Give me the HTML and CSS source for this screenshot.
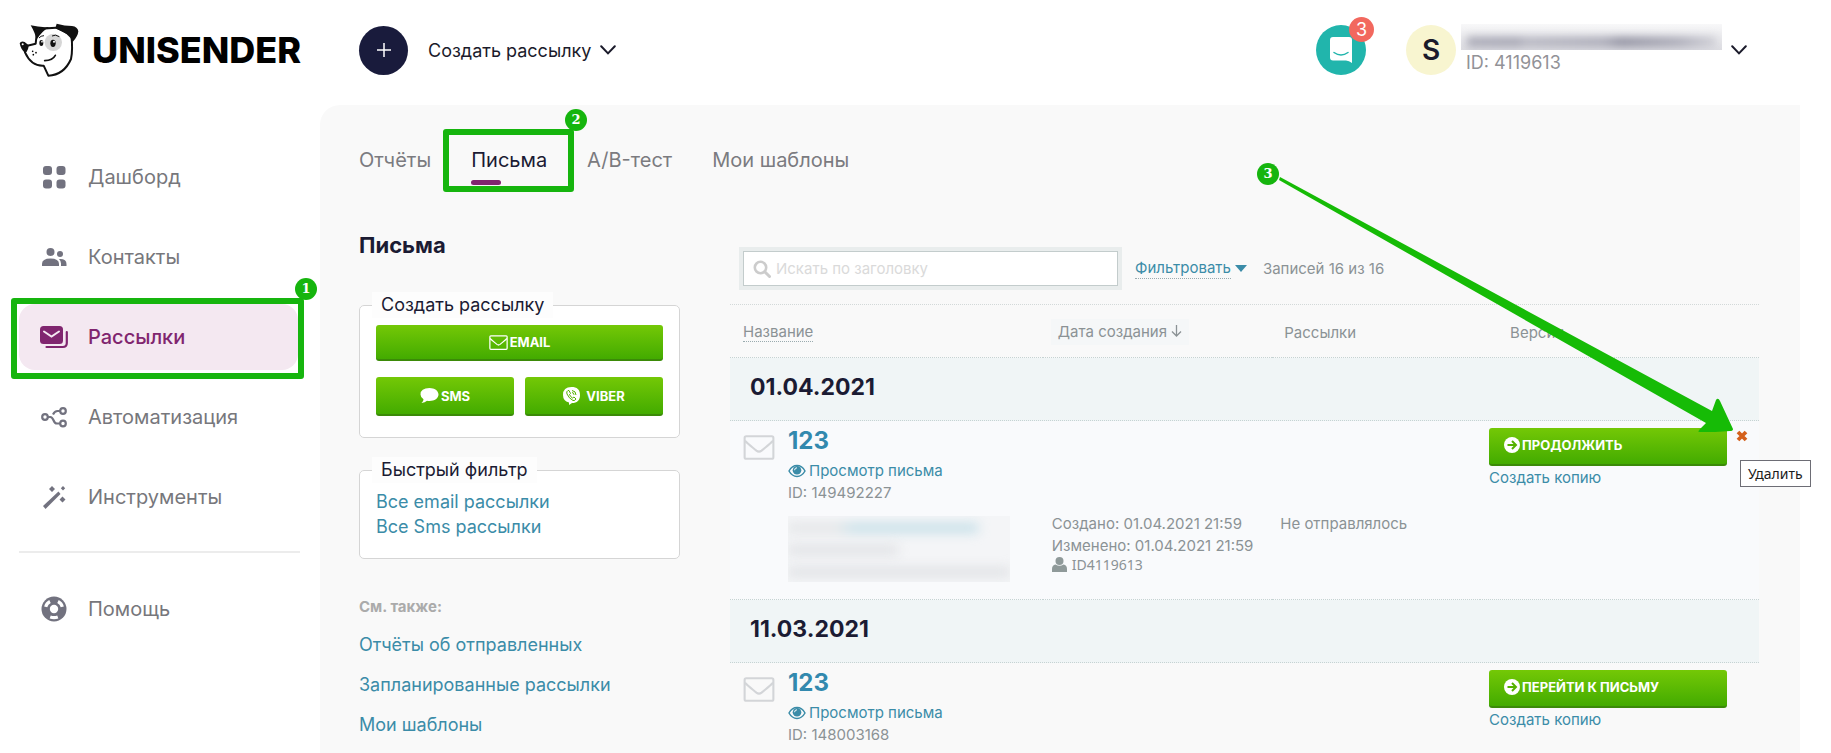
FILE: index.html
```html
<!DOCTYPE html>
<html lang="ru">
<head>
    <meta charset="UTF-8">
    <meta name="viewport" content="width=device-width, initial-scale=1.0">
    <title>Письма - Unisender</title>
    <link rel="stylesheet" href="styles.css">
</head>
<body>
    <!-- shared icons -->
    <svg class="sprite" width="0" height="0">
        <symbol id="i-envelope" viewBox="0 0 30 24">
            <rect x="1.2" y="1.2" width="27.6" height="21.6" rx="1.5" fill="none" stroke="currentColor" stroke-width="2"/>
            <path d="M1.5 5.5C5 9 9 12 12.5 15q2.5 2 5 0C21 12 25 9 28.5 5.5" fill="none" stroke="currentColor" stroke-width="2"/>
        </symbol>
        <symbol id="i-eye" viewBox="0 0 18 14">
            <path d="M1 7C3 3.4 5.8 1.6 9 1.6S15 3.4 17 7c-2 3.6-4.800 5.400-8 5.400S3 10.600 1 7z" fill="none" stroke="currentColor" stroke-width="1.500"/>
            <circle cx="9" cy="6.200" r="4.300" fill="currentColor"/>
            <path d="M6.600 6.200A2.400 2.400 0 0 1 9 3.800" fill="none" stroke="#fff" stroke-width="1"/>
        </symbol>
        <symbol id="i-go" viewBox="0 0 16 16">
            <circle cx="8" cy="8" r="8" fill="#fff"/>
            <path d="M3.500 8h8M8 4l4 4-4 4" fill="none" stroke="#55b200" stroke-width="2"/>
        </symbol>
        <symbol id="i-chevron" viewBox="0 0 16 10">
            <path d="M1.200 1.200L8 8.400l6.800-7.200" fill="none" stroke="#1b1b2b" stroke-width="2" stroke-linecap="round"/>
        </symbol>
    </svg>

    <header class="header">
        <a class="logo" href="#">
            <svg width="60" height="55" viewBox="55 70 180 165">
                <path d="M108 105Q112 84 166 84L212 106Q217 150 211 178Q190 226 143 228L129 198Q92 200 73 158L80 138L105 132z" fill="#fff" stroke="#111" stroke-width="6" stroke-linejoin="round"/>
                <circle cx="158" cy="128" r="26" fill="#d6d6d6"/>
                <path d="M90 77Q118 84 146 82Q126 92 107 121Q105 102 90 77z" fill="#111"/>
                <path d="M168 72Q192 79 214 79Q231 81 233 95Q232 110 216 127Q205 100 164 86z" fill="#111"/>
                <path d="M57 131Q61 123 72 127L84 137Q83 154 73 160Q60 148 57 131z" fill="#111"/>
                <circle cx="66" cy="134" r="3" fill="#fff"/>
                <ellipse cx="157" cy="131" rx="8" ry="11" fill="#111"/>
                <ellipse cx="122" cy="130" rx="6" ry="9" fill="#111"/>
                <circle cx="160" cy="126" r="3" fill="#fff"/>
                <circle cx="124" cy="126" r="2.500" fill="#fff"/>
                <path d="M154 109Q164 103 176 111M115 115Q120 108 130 108" fill="none" stroke="#111" stroke-width="3"/>
                <path d="M132 183Q156 182 164 167" fill="none" stroke="#111" stroke-width="5" stroke-linecap="round"/>
                <circle cx="96" cy="155" r="2.500"/><circle cx="106" cy="159" r="2.500"/><circle cx="98" cy="165" r="2.500"/>
            </svg>
            <span class="logo-text">UNISENDER</span>
        </a>
        <button class="create">
            <span class="create-plus">
                <svg width="14" height="14" viewBox="0 0 14 14"><path d="M7 0v14M0 7h14" stroke="#fff" stroke-width="1.500"/></svg>
            </span>
            Создать рассылку
            <svg class="create-arrow" width="16" height="10"><use href="#i-chevron"/></svg>
        </button>
        <div class="header-right">
            <button class="chat" aria-label="Сообщения">
                <svg width="22" height="26" viewBox="0 0 22 26">
                    <path d="M3 0h16q3 0 3 3v23q-3-2.500-6-2.500H3q-3 0-3-3V3q0-3 3-3z" fill="#fff"/>
                    <path d="M4 15.500q7 5 14 0" fill="none" stroke="#21b5ac" stroke-width="1.500" stroke-linecap="round"/>
                </svg>
                <span class="chat-count">3</span>
            </button>
            <button class="user">
                <span class="avatar">S</span>
                <span class="user-info">
                    <span class="user-mail"><i></i></span>
                    <span class="user-id">ID: 4119613</span>
                </span>
                <svg width="16" height="10"><use href="#i-chevron"/></svg>
            </button>
        </div>
    </header>

    <div class="layout">
        <nav class="sidebar">
            <a class="nav-item" href="#">
                <svg width="28" height="28" viewBox="0 0 28 28" fill="#72727f"><rect x="3" y="3" width="9" height="9" rx="3"/><rect x="16.500" y="3" width="9" height="9" rx="3"/><rect x="3" y="16.500" width="9" height="9" rx="3"/><rect x="16.500" y="16.500" width="9" height="9" rx="3"/></svg>
                Дашборд
            </a>
            <a class="nav-item" href="#">
                <svg width="28" height="28" viewBox="0 0 28 28" fill="#72727f"><circle cx="10.500" cy="9" r="4"/><circle cx="20" cy="11" r="3"/><path d="M2 23v-2q0-5.500 8.500-5.500T19 21v2zM21 23v-2.500q0-2.500-2-4.500 7.500-.5 7.500 5v2z"/></svg>
                Контакты
            </a>
            <a class="nav-item active" href="#">
                <svg width="28" height="28" viewBox="0 0 28 28"><rect x="0" y="3" width="23" height="18" rx="3.500" fill="#80256f"/><path d="M4 8.500l7.500 5 7.500-5" fill="none" stroke="#f4e8f1" stroke-width="2" stroke-linecap="round"/><path d="M26.800 9v11q0 4-4 4H6.500" fill="none" stroke="#80256f" stroke-width="2.200" stroke-linecap="round"/></svg>
                Рассылки
                <span class="mark mark-nav"><span class="mark-num">1</span></span>
            </a>
            <a class="nav-item" href="#">
                <svg width="28" height="28" viewBox="0 0 28 28" fill="none" stroke="#72727f" stroke-width="2.200"><circle cx="5" cy="14" r="2.800"/><circle cx="23" cy="8" r="2.800"/><circle cx="23" cy="20.500" r="2.800"/><path d="M7.800 14h2.500c3.700 0 2.700 6.500 6.500 6.500h3.400M20 8h-2.500c-2.500 0-3.500 1.500-4.500 3.500"/></svg>
                Автоматизация
            </a>
            <a class="nav-item" href="#">
                <svg width="28" height="28" viewBox="0 0 28 28" fill="#72727f"><path d="M3 23L18.500 8.500l2 2.500L5.500 26z"/><path d="M12 3l3 3-3 3-3-3zM23 3l2.200 2.200L23 7.400l-2.200-2.200zM22.500 13.500l3 3-3 3-3-3z"/></svg>
                Инструменты
            </a>
            <hr class="nav-line">
            <a class="nav-item" href="#">
                <svg width="28" height="28" viewBox="0 0 28 28"><circle cx="14" cy="14" r="12.500" fill="#72727f"/><circle cx="14" cy="14" r="4.200" fill="#fff"/><g fill="none" stroke="#fff" stroke-width="3.200"><path d="M5.700 11.800A8.500 8.500 0 0 1 10 6.500M18 6.500a8.500 8.500 0 0 1 4.300 5.300M10.200 22q3.800 1.300 7.600 0"/></g></svg>
                Помощь
            </a>
        </nav>

        <main class="main">
            <div class="tabs">
                <a href="#">Отчёты</a>
                <a class="active" href="#">Письма<span class="mark mark-tab"><span class="mark-num">2</span></span></a>
                <a href="#">A/B-тест</a>
                <a href="#">Мои шаблоны</a>
            </div>

            <div class="columns">
                <aside class="side">
                    <h1>Письма</h1>
                    <fieldset class="box">
                        <legend>Создать рассылку</legend>
                        <button class="btn btn-email"><svg width="19" height="15"><use href="#i-envelope"/></svg>EMAIL</button>
                        <div class="btn-row">
                            <button class="btn">
                                <svg width="19" height="17" viewBox="0 0 19 17"><path d="M9.500 1C14.500 1 18.500 3.800 18.500 7.500S14.500 14 9.500 14q-1.500 0-2.500-.3Q5 15.800 1.500 16 3.500 14.500 3.500 12.200.5 10.300.5 7.500.5 1 9.500 1z" fill="#fff"/></svg>SMS
                            </button>
                            <button class="btn btn-viber">
                                <svg width="17" height="18" viewBox="0 0 17 18"><path d="M8.500 0C14 0 17 2.500 17 8s-3 8-8 8L6 18v-2.500Q0 14 0 8 0 0 8.500 0z" fill="#fff"/><path d="M5 3.500q-2 1-1 3.500 2 4.500 6 6.500 2 .5 3-1.500L11 10l-1.500 1Q7.500 10 6.500 7.500l1-1L6 3.500zM9 3.500q4 .5 4 4.500M9 5.500q2 .2 2 2.300" fill="none" stroke="#53b000" stroke-width="1"/></svg>VIBER
                            </button>
                        </div>
                    </fieldset>
                    <fieldset class="box box-filter">
                        <legend>Быстрый фильтр</legend>
                        <a href="#">Все email рассылки</a>
                        <a href="#">Все Sms рассылки</a>
                    </fieldset>
                    <div class="see-also">
                        <h2>См. также:</h2>
                        <a href="#">Отчёты об отправленных</a>
                        <a href="#">Запланированные рассылки</a>
                        <a href="#">Мои шаблоны</a>
                    </div>
                </aside>

                <section class="list">
                    <div class="toolbar">
                        <label class="search">
                            <svg width="18" height="18" viewBox="0 0 18 18"><circle cx="7.500" cy="7.500" r="5.700" fill="none" stroke="#ccc" stroke-width="2.600"/><path d="M12 12l4.500 4.500" stroke="#ccc" stroke-width="3" stroke-linecap="round"/></svg>
                            <input type="text" placeholder="Искать по заголовку" aria-label="Искать по заголовку">
                        </label>
                        <a class="filter" href="#"><span class="dotted">Фильтровать</span><span class="caret"></span></a>
                        <span class="total">Записей 16 из 16</span>
                    </div>

                    <table class="letters">
                        <thead>
                            <tr>
                                <th class="col-name"><span class="dotted">Название</span></th>
                                <th class="col-date"><span class="sorted">Дата создания
                                    <svg width="11" height="12" viewBox="0 0 11 12"><path d="M5.500 0v11M1 6.500L5.500 11 10 6.500" fill="none" stroke="#8b9295" stroke-width="1.300"/></svg></span></th>
                                <th class="col-sent">Рассылки</th>
                                <th class="col-version">Версии</th>
                            </tr>
                        </thead>
                        <tbody>
                            <tr class="day"><td colspan="4">01.04.2021</td></tr>
                            <tr class="letter current">
                                <td>
                                    <div class="letter-name">
                                        <svg class="letter-icon" width="32" height="25"><use href="#i-envelope"/></svg>
                                        <div>
                                            <a class="letter-title" href="#">123</a>
                                            <a class="preview" href="#"><svg width="18" height="14"><use href="#i-eye"/></svg>Просмотр письма</a>
                                            <div class="letter-id">ID: 149492227</div>
                                            <div class="hidden-info"><i class="wide"></i><i class="short"></i><i></i></div>
                                        </div>
                                    </div>
                                </td>
                                <td class="meta">
                                    <div>Создано: 01.04.2021 21:59</div>
                                    <div>Изменено: 01.04.2021 21:59</div>
                                    <div class="owner"><svg width="15" height="15" viewBox="0 0 15 15" fill="#8f9999"><circle cx="7.500" cy="4" r="4"/><path d="M0 15v-3q0-4 3.500-4.500 4 2.500 8 0Q15 8 15 12v3z"/></svg>ID4119613</div>
                                </td>
                                <td class="meta meta-sent">Не отправлялось</td>
                                <td>
                                    <div class="actions">
                                        <button class="btn btn-go"><svg width="16" height="16"><use href="#i-go"/></svg>ПРОДОЛЖИТЬ</button>
                                        <button class="delete" aria-label="Удалить">
                                            <svg width="12" height="12" viewBox="0 0 12 12"><path d="M2 2l8 8M10 2L2 10" stroke="#d4601c" stroke-width="3.800"/></svg>
                                            <span class="tooltip">Удалить</span>
                                        </button>
                                    </div>
                                    <a class="copy" href="#">Создать копию</a>
                                </td>
                            </tr>
                            <tr class="day"><td colspan="4">11.03.2021</td></tr>
                            <tr class="letter">
                                <td>
                                    <div class="letter-name">
                                        <svg class="letter-icon" width="32" height="25"><use href="#i-envelope"/></svg>
                                        <div>
                                            <a class="letter-title" href="#">123</a>
                                            <a class="preview" href="#"><svg width="18" height="14"><use href="#i-eye"/></svg>Просмотр письма</a>
                                            <div class="letter-id">ID: 148003168</div>
                                        </div>
                                    </div>
                                </td>
                                <td></td>
                                <td></td>
                                <td>
                                    <div class="actions">
                                        <button class="btn btn-go"><svg width="16" height="16"><use href="#i-go"/></svg>ПЕРЕЙТИ К ПИСЬМУ</button>
                                    </div>
                                    <a class="copy" href="#">Создать копию</a>
                                </td>
                            </tr>
                        </tbody>
                    </table>
                </section>
            </div>

            <!-- arrow to the delete button -->
            <div class="pointer">
                <span class="mark-num">3</span>
                <svg width="455" height="256" viewBox="1280 176 455 256"><path d="M1281 177L1713 411L1717 400Q1719 397 1721 401L1734 429Q1734 431 1731 431L1701 433Q1698 432 1701 429L1707 423L1280 180z" fill="#16bb06"/></svg>
            </div>
        </main>
    </div>
</body>
</html>
```

FILE: styles.css
```css
* {
    box-sizing: border-box;
}
body {
    margin: 0;
    min-height: 100vh;
    display: flex;
    flex-direction: column;
    font-family: Inter, "Liberation Sans", sans-serif;
    font-size: 15px;
    color: #1b1b33;
    background-color: #fff;
}
a {
    color: #3b8ca8;
    text-decoration: none;
}
button {
    font-family: inherit;
    border: none;
    background: none;
    padding: 0;
    cursor: pointer;
}
.sprite {
    position: absolute;
}

/* header */
.header {
    display: flex;
    align-items: center;
    height: 105px;
    padding: 0 84px 5px 19px;
}
.logo {
    display: flex;
    align-items: center;
    gap: 13px;
    width: 340px;
    color: #000;
}
.logo-text {
    font-size: 36px;
    font-weight: 800;
}
.create {
    display: flex;
    align-items: center;
    font-size: 18px;
    color: #1b1b2b;
}
.create-plus {
    display: flex;
    align-items: center;
    justify-content: center;
    width: 49px;
    height: 49px;
    margin-right: 20px;
    border-radius: 50%;
    background-color: #191b3c;
}
.create-arrow {
    margin-left: 9px;
}
.header-right {
    display: flex;
    align-items: center;
    gap: 40px;
    margin-left: auto;
}
.chat {
    position: relative;
    display: flex;
    align-items: center;
    justify-content: center;
    width: 50px;
    height: 50px;
    border-radius: 50%;
    background-color: #21b5ac;
}
.chat-count {
    position: absolute;
    top: -8px;
    right: -8px;
    width: 25px;
    height: 25px;
    border-radius: 50%;
    background-color: #f2685e;
    color: #fff;
    font-size: 18px;
    line-height: 25px;
}
.user {
    display: flex;
    align-items: center;
}
.avatar {
    width: 50px;
    height: 50px;
    border-radius: 50%;
    background-color: #f8f5d0;
    color: #1b1b2b;
    font-size: 28px;
    font-weight: 600;
    line-height: 50px;
}
.user-info {
    margin: 0 9px 0 5px;
    text-align: left;
}
/* private data is smeared out */
.user-mail {
    display: block;
    width: 261px;
    height: 26px;
    padding: 13px 6px 0;
    overflow: hidden;
    background: linear-gradient(#f8f8f9, #dddde2);
}
.user-mail i {
    display: block;
    height: 10px;
    background: linear-gradient(90deg, #a9a9b6, #a4a4b2 20%, #b5b5c0 24%, #a9a9b6 55%, #8f8f9f 62%, #a9a9b6 85%, #cfcfd6);
    filter: blur(4px);
}
.user-id {
    display: block;
    padding-left: 5px;
    font-size: 18px;
    line-height: 26px;
    color: #929297;
}

/* sidebar */
.layout {
    display: flex;
    flex: 1;
}
.sidebar {
    width: 320px;
    flex-shrink: 0;
    padding: 39px 20px 0 19px;
}
.nav-item {
    position: relative;
    display: flex;
    align-items: center;
    gap: 20px;
    height: 66px;
    margin: 0 2px 14px 0;
    padding-left: 21px;
    border-radius: 16px;
    font-size: 20px;
    color: #77777c;
}
.nav-item.active {
    background-color: #f4e8f1;
    color: #80256f;
    font-weight: 500;
}
.nav-line {
    height: 2px;
    margin: 21px 0 23px;
    border: none;
    background-color: #ececec;
}

/* green numbered marks */
.mark {
    position: absolute;
    border: 6px solid #16b50e;
    border-radius: 3px;
}
.mark-nav {
    top: -6px;
    bottom: -9px;
    left: -8px;
    right: -6px;
}
.mark-tab {
    top: -17px;
    bottom: -18px;
    left: -28px;
    right: -27px;
}
.mark-num {
    position: absolute;
    top: -26px;
    right: -19px;
    width: 22px;
    height: 22px;
    border-radius: 50%;
    background-color: #16b50e;
    color: #fff;
    font: bold 13px/22px "DejaVu Serif", serif;
    text-align: center;
}
.pointer {
    position: absolute;
    top: 71px;
    right: 66px;
    pointer-events: none;
}
.pointer svg {
    display: block;
}
.pointer .mark-num {
    top: -13px;
    left: -22px;
}

/* main panel */
.main {
    position: relative;
    flex: 1;
    min-width: 0;
    margin-right: 31px;
    padding: 41px 41px 0 39px;
    border-top-left-radius: 20px;
    background-color: #f9f9f9;
}
.tabs {
    display: flex;
    gap: 40px;
    font-size: 20px;
    line-height: 28px;
}
.tabs a {
    position: relative;
    color: #7b7b80;
}
.tabs a.active {
    color: #1b1b33;
}
.tabs a.active::after {
    content: "";
    position: absolute;
    left: 0;
    top: 34px;
    width: 30px;
    height: 5px;
    border-radius: 3px;
    background-color: #80256f;
}
.columns {
    display: flex;
    gap: 50px;
    padding-top: 56px;
}
.side {
    width: 321px;
    flex-shrink: 0;
}
h1 {
    margin: 0 0 32px;
    font-size: 22px;
    line-height: 30px;
}
.box {
    margin: 0 0 19px;
    padding: 7px 16px 21px;
    border: 1px solid #d5d5d5;
    border-radius: 5px;
    background-color: #fff;
}
.box legend {
    margin-left: -4px;
    padding: 0 9px;
    font-size: 18px;
    line-height: 26px;
    background-color: #fdfdfd;
}
.box-filter {
    padding-top: 6px;
    padding-bottom: 19px;
}
.box-filter a {
    display: block;
    font-size: 18px;
    line-height: 25px;
}
.btn {
    display: flex;
    align-items: center;
    justify-content: center;
    gap: 2px;
    width: 100%;
    height: 39px;
    border-bottom: 2px solid #3b8a08;
    border-radius: 3px;
    background: linear-gradient(#74c806, #43ab00);
    color: #fff;
    font-size: 13px;
    font-weight: 700;
}
.btn-email {
    height: 36px;
    margin-bottom: 16px;
}
.btn-viber {
    gap: 6px;
}
.btn-row {
    display: flex;
    gap: 11px;
}
.see-also h2 {
    margin: 38px 0 8px;
    font-size: 15px;
    line-height: 20px;
    color: #ababab;
}
.see-also a {
    display: block;
    font-size: 18px;
    line-height: 40px;
}

/* letters list */
.list {
    flex: 1;
    min-width: 0;
    padding-top: 17px;
}
.toolbar {
    display: flex;
    align-items: center;
    padding: 0 13px 14px 9px;
    color: #8b9295;
}
.search {
    display: flex;
    align-items: center;
    gap: 5px;
    width: 383px;
    height: 43px;
    padding: 0 10px;
    border: 4px solid #e9eded;
    background-color: #fff;
    box-shadow: inset 0 0 0 1px #c3cccc;
}
.search input {
    flex: 1;
    min-width: 0;
    padding: 0;
    border: none;
    outline: none;
    background: none;
    font: 15px Inter, sans-serif;
}
.search input::placeholder {
    color: #dadada;
}
.filter {
    display: flex;
    align-items: center;
    gap: 4px;
    margin: 0 16px 0 13px;
}
.dotted {
    line-height: 20px;
    border-bottom: 1px dotted #9aabaf;
}
.caret {
    border: 6px solid transparent;
    border-top: 7px solid #3b8ca8;
    border-bottom: none;
}
.letters {
    width: 100%;
    table-layout: fixed;
    border-spacing: 0;
    border-top: 1px dotted #d3d9d9;
}
.letters th,
.letters td {
    padding: 0;
    text-align: left;
    vertical-align: top;
}
.letters th {
    height: 53px;
    padding-top: 2px;
    border-bottom: 1px dotted #c6d3d3;
    vertical-align: middle;
    font-weight: 400;
    color: #8b9295;
}
.letters .col-name {
    width: 30.4%;
    padding-left: 13px;
}
.letters .col-date {
    width: 22.3%;
    padding-left: 8px;
}
.letters .col-sent {
    width: 20.2%;
    padding-left: 12px;
}
.letters .col-version {
    padding-left: 30px;
}
.sorted {
    display: inline-block;
    padding: 0 7px;
    line-height: 26px;
    background-color: #f5f7f8;
}
.letters .day td {
    height: 63px;
    padding: 0 20px 4px;
    border-bottom: 1px dotted #c6d3d3;
    background-color: #f0f5f6;
    vertical-align: middle;
    font-size: 23px;
    font-weight: 700;
}
.letter.current td {
    height: 179px;
    border-bottom: 1px dotted #c6d3d3;
    background-color: #f9fafc;
}
.letter-name {
    display: flex;
    gap: 13px;
    padding: 5px 0 0 13px;
}
.letter-icon {
    margin-top: 9px;
    color: #d3d5d8;
}
.letter-title {
    display: block;
    font-size: 24px;
    font-weight: 700;
    line-height: 30px;
    color: #3289ae;
}
.preview {
    display: flex;
    align-items: center;
    gap: 3px;
    margin-top: 4px;
    line-height: 22px;
}
.letter-id {
    line-height: 22px;
    color: #8b9295;
}
.hidden-info {
    width: 222px;
    height: 66px;
    margin-top: 12px;
    padding: 8px 0;
    overflow: hidden;
    background-color: #f4f5f7;
}
.hidden-info i {
    display: block;
    height: 8px;
    margin-bottom: 14px;
    background-color: #dcdee1;
    filter: blur(6px);
}
.hidden-info .wide {
    width: 190px;
    background: linear-gradient(90deg, #e0e2e4 25%, #bcdbe5 35%);
}
.hidden-info .short {
    width: 110px;
}
.letter .meta {
    padding: 92px 0 0 9px;
    line-height: 22px;
    color: #8b9295;
}
.letter .meta-sent {
    padding-left: 8px;
}
.owner {
    display: flex;
    align-items: center;
    gap: 5px;
    font-family: "Noto Sans", sans-serif;
    font-size: 14px;
    line-height: 14px;
}
.actions {
    display: flex;
    gap: 9px;
    padding: 7px 0 0 9px;
}
.btn-go {
    width: 238px;
    height: 38px;
    justify-content: flex-start;
    padding: 0 15px 2px;
}
.delete {
    position: relative;
    width: 12px;
    height: 18px;
}
.tooltip {
    position: absolute;
    top: 32px;
    left: 4px;
    padding: 0 7px;
    border: 1px solid #6d6d75;
    background-color: #fff;
    color: #1b1b1b;
    font: 14px/25px "Noto Sans", sans-serif;
}
.copy {
    display: block;
    padding-left: 9px;
    line-height: 24px;
}
```
